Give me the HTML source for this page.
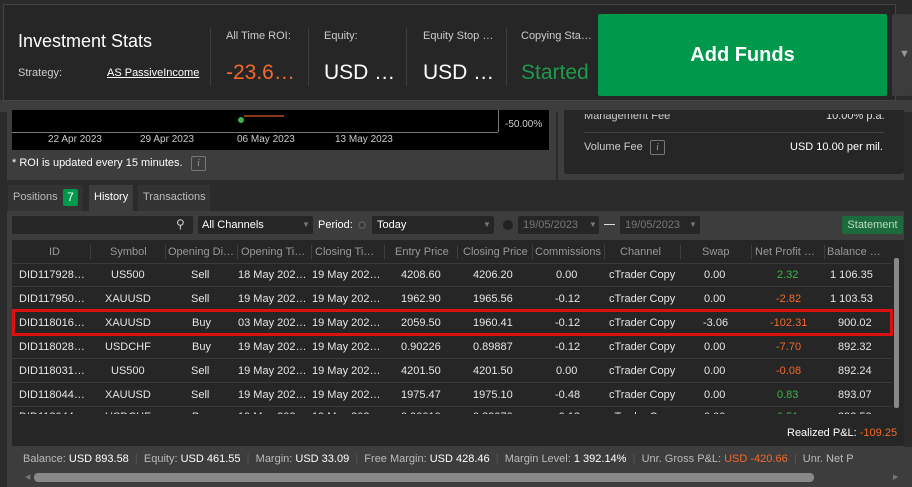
<!DOCTYPE html>
<html><head><meta charset="utf-8"><style>
*{margin:0;padding:0;box-sizing:border-box}
body{width:912px;height:487px;overflow:hidden;background:#2b2b2b;font-family:"Liberation Sans",sans-serif;color:#ddd;position:relative;font-size:11px}
.a{position:absolute;white-space:nowrap}
.hdr{left:3px;top:4px;width:893px;height:97px;background:#262626;border:1px solid #444}
.sep{position:absolute;width:1px;background:#3e3e3e}
.lbl{color:#ccc;font-size:11px}
.big{font-size:21px;color:#fff}
.row{position:absolute;left:12px;width:880px;height:24px;border-bottom:1px solid #3a3a3a;font-size:11px;color:#e6e6e6}
.row span{position:absolute;top:6px;white-space:nowrap}
.th span{position:absolute;top:6px;color:#999;white-space:nowrap}
.r{color:#f26a2a}.g{color:#3db54a}
.inp{position:absolute;background:#262626;border-radius:2px;height:18px;top:216px}
.tri{position:absolute;color:#777;font-size:8px;top:4px}
</style></head><body>
<div class="a" style="left:0;top:100px;width:912px;height:12px;background:#3d3d3d"></div>
<div class="a hdr"></div>
<div class="a" style="left:18px;top:31px;font-size:18px;color:#fff">Investment Stats</div>
<div class="a lbl" style="left:18px;top:67px">Strategy:</div>
<div class="a" style="left:107px;top:67px;color:#fff;text-decoration:underline">AS PassiveIncome</div>
<div class="sep" style="left:210px;top:28px;height:58px"></div>
<div class="sep" style="left:308px;top:28px;height:58px"></div>
<div class="sep" style="left:406px;top:28px;height:58px"></div>
<div class="sep" style="left:506px;top:28px;height:58px"></div>
<div class="a lbl" style="left:226px;top:30px">All Time ROI:</div>
<div class="a big" style="left:226px;top:61px;color:#f26a2a">-23.6…</div>
<div class="a lbl" style="left:324px;top:30px">Equity:</div>
<div class="a big" style="left:324px;top:61px">USD …</div>
<div class="a lbl" style="left:423px;top:30px">Equity Stop …</div>
<div class="a big" style="left:423px;top:61px">USD …</div>
<div class="a lbl" style="left:521px;top:30px">Copying Sta…</div>
<div class="a big" style="left:521px;top:61px;color:#1e9a4c">Started</div>
<div class="a" style="left:598px;top:14px;width:289px;height:82px;background:#00984a;border-radius:2px;color:#fff;font-weight:bold;font-size:20px;text-align:center;line-height:82px">Add Funds</div>
<div class="a" style="left:892px;top:14px;width:20px;height:82px;background:#3c3c3c;border-radius:2px;color:#999;font-size:11px;padding:34px 0 0 7px">▼</div>

<div class="a" style="left:7px;top:110px;width:549px;height:70px;background:#3d3d3d"></div>
<div class="a" style="left:12px;top:110px;width:537px;height:40px;background:#000"></div>
<div class="a" style="left:12px;top:132px;width:486px;height:1px;background:#777"></div>
<div class="a" style="left:498px;top:110px;width:1px;height:22px;background:#777"></div>
<div class="a" style="left:238px;top:117px;width:6px;height:6px;border-radius:3px;background:#3db54a"></div>
<div class="a" style="left:244px;top:115px;width:40px;height:2px;background:#8a3a1a"></div>
<div class="a" style="left:505px;top:119px;color:#ccc;font-size:10px">-50.00%</div>
<div class="a" style="left:48px;top:134px;color:#ccc;font-size:10px">22 Apr 2023</div>
<div class="a" style="left:140px;top:134px;color:#ccc;font-size:10px">29 Apr 2023</div>
<div class="a" style="left:237px;top:134px;color:#ccc;font-size:10px">06 May 2023</div>
<div class="a" style="left:335px;top:134px;color:#ccc;font-size:10px">13 May 2023</div>
<div class="a" style="left:12px;top:157px;color:#fff">* ROI is updated every 15 minutes.</div>
<div class="a" style="left:191px;top:156px;width:15px;height:15px;border:1px solid #777;border-radius:2px;color:#999;font-style:italic;font-size:10px;text-align:center;line-height:13px;font-family:'Liberation Serif',serif">i</div>

<div class="a" style="left:558px;top:110px;width:346px;height:70px;background:#3d3d3d"></div>
<div class="a" style="left:564px;top:110px;width:340px;height:64px;background:#262626;border-radius:0 0 3px 3px"></div>
<div class="a" style="left:584px;top:110px;color:#ccc;clip-path:inset(4px 0 0 0)">Management Fee</div>
<div class="a" style="left:826px;top:110px;color:#ddd;clip-path:inset(4px 0 0 0)">10.00% p.a.</div>
<div class="a" style="left:584px;top:132px;width:300px;height:1px;background:#444"></div>
<div class="a" style="left:584px;top:141px;color:#ccc">Volume Fee</div>
<div class="a" style="left:650px;top:140px;width:15px;height:15px;border:1px solid #777;border-radius:2px;color:#999;font-style:italic;font-size:10px;text-align:center;line-height:13px;font-family:'Liberation Serif',serif">i</div>
<div class="a" style="left:790px;top:141px;color:#fff">USD 10.00 per mil.</div>

<div class="a" style="left:8px;top:185px;width:75px;height:26px;background:#333"></div>
<div class="a" style="left:13px;top:191px;color:#bbb">Positions</div>
<div class="a" style="left:63px;top:189px;width:15px;height:17px;background:#00984a;border-radius:2px;color:#fff;text-align:center;line-height:17px;font-size:12px">7</div>
<div class="a" style="left:89px;top:185px;width:44px;height:26px;background:#3d3d3d;color:#fff;padding:6px 0 0 5px">History</div>
<div class="a" style="left:138px;top:185px;width:72px;height:26px;background:#333;color:#bbb;padding:6px 0 0 5px">Transactions</div>

<div class="a" style="left:7px;top:211px;width:897px;height:236px;background:#3d3d3d"></div>
<div class="inp" style="left:12px;width:181px"><span class="a" style="left:164px;top:1px;color:#ccc;font-size:12px">⚲</span></div>
<div class="inp" style="left:198px;width:115px"><span class="a" style="left:4px;top:3px;color:#fff">All Channels</span><span class="tri" style="left:104px">▼</span></div>
<div class="a" style="left:318px;top:219px;color:#fff">Period:</div>
<div class="a" style="left:358px;top:221px;width:8px;height:8px;border-radius:4px;background:#333;border:2px solid #555"></div>
<div class="inp" style="left:372px;width:122px"><span class="a" style="left:5px;top:3px;color:#fff">Today</span><span class="tri" style="left:111px">▼</span></div>
<div class="a" style="left:503px;top:220px;width:10px;height:10px;border-radius:5px;background:#222"></div>
<div class="inp" style="left:518px;width:81px"><span class="a" style="left:5px;top:3px;color:#777">19/05/2023</span><span class="tri" style="left:71px">▼</span></div>
<div class="a" style="left:604px;top:224px;width:11px;height:1px;background:#ddd"></div>
<div class="inp" style="left:620px;width:80px"><span class="a" style="left:5px;top:3px;color:#777">19/05/2023</span><span class="tri" style="left:69px">▼</span></div>
<div class="a" style="left:842px;top:216px;width:61px;height:18px;background:#1d6b3c;border-radius:2px;text-align:center;line-height:18px;color:#b8dcc3">Statement</div>

<div class="a" style="left:12px;top:240px;width:892px;height:206px;background:#262626;border-radius:2px"></div>
<div class="a th" style="left:12px;top:240px;width:880px;height:24px;border-bottom:1px solid #3a3a3a">
<span style="left:37px">ID</span><span style="left:98px">Symbol</span><span style="left:156px">Opening Di…</span><span style="left:229px">Opening Ti…</span><span style="left:303px">Closing Ti…</span><span style="left:383px">Entry Price</span><span style="left:451px">Closing Price</span><span style="left:523px">Commissions</span><span style="left:608px">Channel</span><span style="left:690px">Swap</span><span style="left:743px">Net Profit …</span><span style="left:815px">Balance …</span>
</div>
<div class="a" style="left:12px;top:240px;width:880px;height:24px">
<div class="sep" style="left:78px;top:5px;height:14px"></div><div class="sep" style="left:153px;top:5px;height:14px"></div><div class="sep" style="left:225px;top:5px;height:14px"></div><div class="sep" style="left:299px;top:5px;height:14px"></div><div class="sep" style="left:372px;top:5px;height:14px"></div><div class="sep" style="left:445px;top:5px;height:14px"></div><div class="sep" style="left:520px;top:5px;height:14px"></div><div class="sep" style="left:592px;top:5px;height:14px"></div><div class="sep" style="left:668px;top:5px;height:14px"></div><div class="sep" style="left:739px;top:5px;height:14px"></div><div class="sep" style="left:812px;top:5px;height:14px"></div>
</div>

<div class="row" style="top:263px"><span style="left:7px">DID117928…</span><span style="left:99px">US500</span><span style="left:179px">Sell</span><span style="left:226px">18 May 202…</span><span style="left:300px">19 May 202…</span><span style="left:389px">4208.60</span><span style="left:461px">4206.20</span><span style="left:544px">0.00</span><span style="left:597px">cTrader Copy</span><span style="left:692px">0.00</span><span class="g" style="left:765px">2.32</span><span style="left:818px">1 106.35</span></div>
<div class="row" style="top:287px"><span style="left:7px">DID117950…</span><span style="left:93px">XAUUSD</span><span style="left:179px">Sell</span><span style="left:226px">19 May 202…</span><span style="left:300px">19 May 202…</span><span style="left:389px">1962.90</span><span style="left:461px">1965.56</span><span style="left:543px">-0.12</span><span style="left:597px">cTrader Copy</span><span style="left:692px">0.00</span><span class="r" style="left:764px">-2.82</span><span style="left:818px">1 103.53</span></div>
<div class="row" style="top:311px"><span style="left:7px">DID118016…</span><span style="left:93px">XAUUSD</span><span style="left:180px">Buy</span><span style="left:226px">03 May 202…</span><span style="left:300px">19 May 202…</span><span style="left:389px">2059.50</span><span style="left:461px">1960.41</span><span style="left:543px">-0.12</span><span style="left:597px">cTrader Copy</span><span style="left:691px">-3.06</span><span class="r" style="left:758px">-102.31</span><span style="left:826px">900.02</span></div>
<div class="row" style="top:335px"><span style="left:7px">DID118028…</span><span style="left:93px">USDCHF</span><span style="left:180px">Buy</span><span style="left:226px">19 May 202…</span><span style="left:300px">19 May 202…</span><span style="left:389px">0.90226</span><span style="left:461px">0.89887</span><span style="left:543px">-0.12</span><span style="left:597px">cTrader Copy</span><span style="left:692px">0.00</span><span class="r" style="left:764px">-7.70</span><span style="left:826px">892.32</span></div>
<div class="row" style="top:359px"><span style="left:7px">DID118031…</span><span style="left:99px">US500</span><span style="left:179px">Sell</span><span style="left:226px">19 May 202…</span><span style="left:300px">19 May 202…</span><span style="left:389px">4201.50</span><span style="left:461px">4201.50</span><span style="left:544px">0.00</span><span style="left:597px">cTrader Copy</span><span style="left:692px">0.00</span><span class="r" style="left:764px">-0.08</span><span style="left:826px">892.24</span></div>
<div class="row" style="top:383px"><span style="left:7px">DID118044…</span><span style="left:93px">XAUUSD</span><span style="left:179px">Sell</span><span style="left:226px">19 May 202…</span><span style="left:300px">19 May 202…</span><span style="left:389px">1975.47</span><span style="left:461px">1975.10</span><span style="left:543px">-0.48</span><span style="left:597px">cTrader Copy</span><span style="left:692px">0.00</span><span class="g" style="left:765px">0.83</span><span style="left:826px">893.07</span></div>
<div class="row" style="top:407px;height:7px;overflow:hidden;border:none"><span style="left:7px;top:4px">DID118044…</span><span style="left:93px;top:4px">USDCHF</span><span style="left:180px;top:4px">Buy</span><span style="left:226px;top:4px">19 May 202…</span><span style="left:300px;top:4px">19 May 202…</span><span style="left:389px;top:4px">0.90010</span><span style="left:461px;top:4px">0.89970</span><span style="left:543px;top:4px">-0.12</span><span style="left:597px;top:4px">cTrader Copy</span><span style="left:692px;top:4px">0.00</span><span class="g" style="left:765px;top:4px">0.51</span><span style="left:826px;top:4px">893.58</span></div>
<div class="a" style="left:12px;top:309px;width:881px;height:27px;border:3px solid #d11"></div>
<div class="a" style="left:894px;top:258px;width:5px;height:150px;background:#888;border-radius:2px"></div>
<div class="a" style="left:787px;top:427px;color:#fff">Realized P&amp;L: <span class="r">-109.25</span></div>

<div class="a" style="left:7px;top:447px;width:905px;height:40px;background:#3d3d3d"></div>
<div class="a" style="left:23px;top:453px;color:#bbb">Balance: <b style="font-weight:normal;color:#fff">USD 893.58</b> <span style="color:#555">&nbsp;|&nbsp;</span> Equity: <b style="font-weight:normal;color:#fff">USD 461.55</b> <span style="color:#555">&nbsp;|&nbsp;</span> Margin: <b style="font-weight:normal;color:#fff">USD 33.09</b> <span style="color:#555">&nbsp;|&nbsp;</span> Free Margin: <b style="font-weight:normal;color:#fff">USD 428.46</b> <span style="color:#555">&nbsp;|&nbsp;</span> Margin Level: <b style="font-weight:normal;color:#fff">1 392.14%</b> <span style="color:#555">&nbsp;|&nbsp;</span> Unr. Gross P&amp;L: <span class="r">USD -420.66</span> <span style="color:#555">&nbsp;|&nbsp;</span> Unr. Net P</div>
<div class="a" style="left:34px;top:473px;width:780px;height:9px;background:#888;border-radius:4px"></div>
<div class="a" style="left:25px;top:473px;color:#777;font-size:7px">◀</div>
<div class="a" style="left:893px;top:473px;color:#777;font-size:7px">▶</div>
</body></html>
